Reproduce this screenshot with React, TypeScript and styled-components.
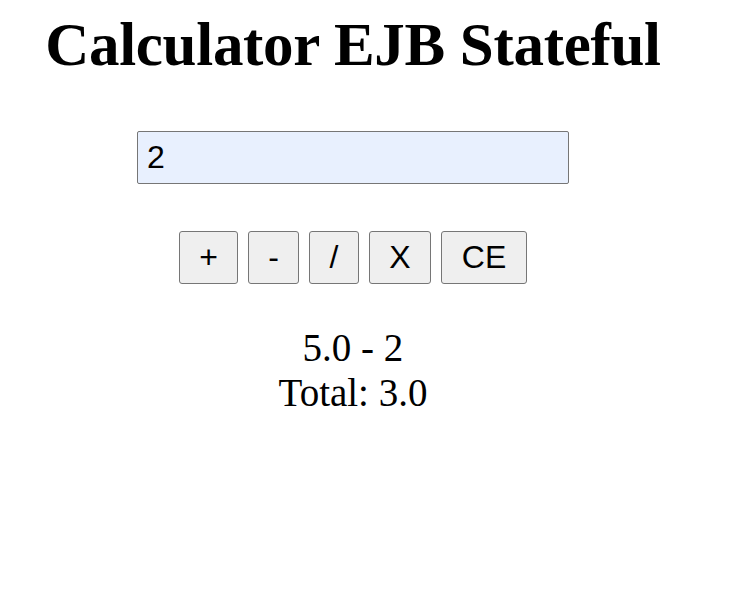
import React, { useState } from "react";
import styled, { createGlobalStyle } from "styled-components";

const GlobalStyle = createGlobalStyle`
  html, body { margin: 0; padding: 0; background: #ffffff; }
  body { font-family: "Liberation Serif", "Times New Roman", serif; color: #000; }
`;

const Page = styled.div`
  width: 706px;
  display: flex;
  flex-direction: column;
  align-items: center;
  padding-top: 10px;
`;

const Title = styled.h1`
  margin: 0;
  font-family: "Liberation Serif", "Times New Roman", serif;
  font-weight: bold;
  font-size: 61px;
  line-height: 70px;
  letter-spacing: -0.3px;
`;

const Display = styled.input`
  box-sizing: border-box;
  margin-top: 51px;
  width: 432px;
  height: 53px;
  padding: 0 9px;
  border: 1px solid #767676;
  border-radius: 2px;
  background: #e8f0fe;
  font-family: "Liberation Sans", Arial, sans-serif;
  font-size: 32px;
  color: #000;
  outline: none;
`;

const Keys = styled.div`
  display: flex;
  gap: 10px;
  margin-top: 47px;
`;

const Key = styled.button<{ $w: number }>`
  box-sizing: border-box;
  width: ${(p) => p.$w}px;
  height: 53px;
  padding: 0;
  border: 1px solid #767676;
  border-radius: 3px;
  background: #efefef;
  font-family: "Liberation Sans", Arial, sans-serif;
  font-size: 32px;
  color: #000;
  cursor: pointer;
`;

const Result = styled.div`
  margin-top: 41px;
  font-family: "Liberation Serif", "Times New Roman", serif;
  font-size: 39px;
  line-height: 45px;
  text-align: center;
`;

export default function App() {
  const [value, setValue] = useState("2");
  const keys: [string, number][] = [
    ["+", 59],
    ["-", 51],
    ["/", 50],
    ["X", 62],
    ["CE", 86],
  ];
  return (
    <>
      <GlobalStyle />
      <Page>
        <Title>Calculator EJB Stateful</Title>
        <Display value={value} onChange={(e) => setValue(e.target.value)} />
        <Keys>
          {keys.map(([k, w]) => (
            <Key key={k} $w={w}>
              {k}
            </Key>
          ))}
        </Keys>
        <Result>
          <div>5.0 - 2</div>
          <div>Total: 3.0</div>
        </Result>
      </Page>
    </>
  );
}
